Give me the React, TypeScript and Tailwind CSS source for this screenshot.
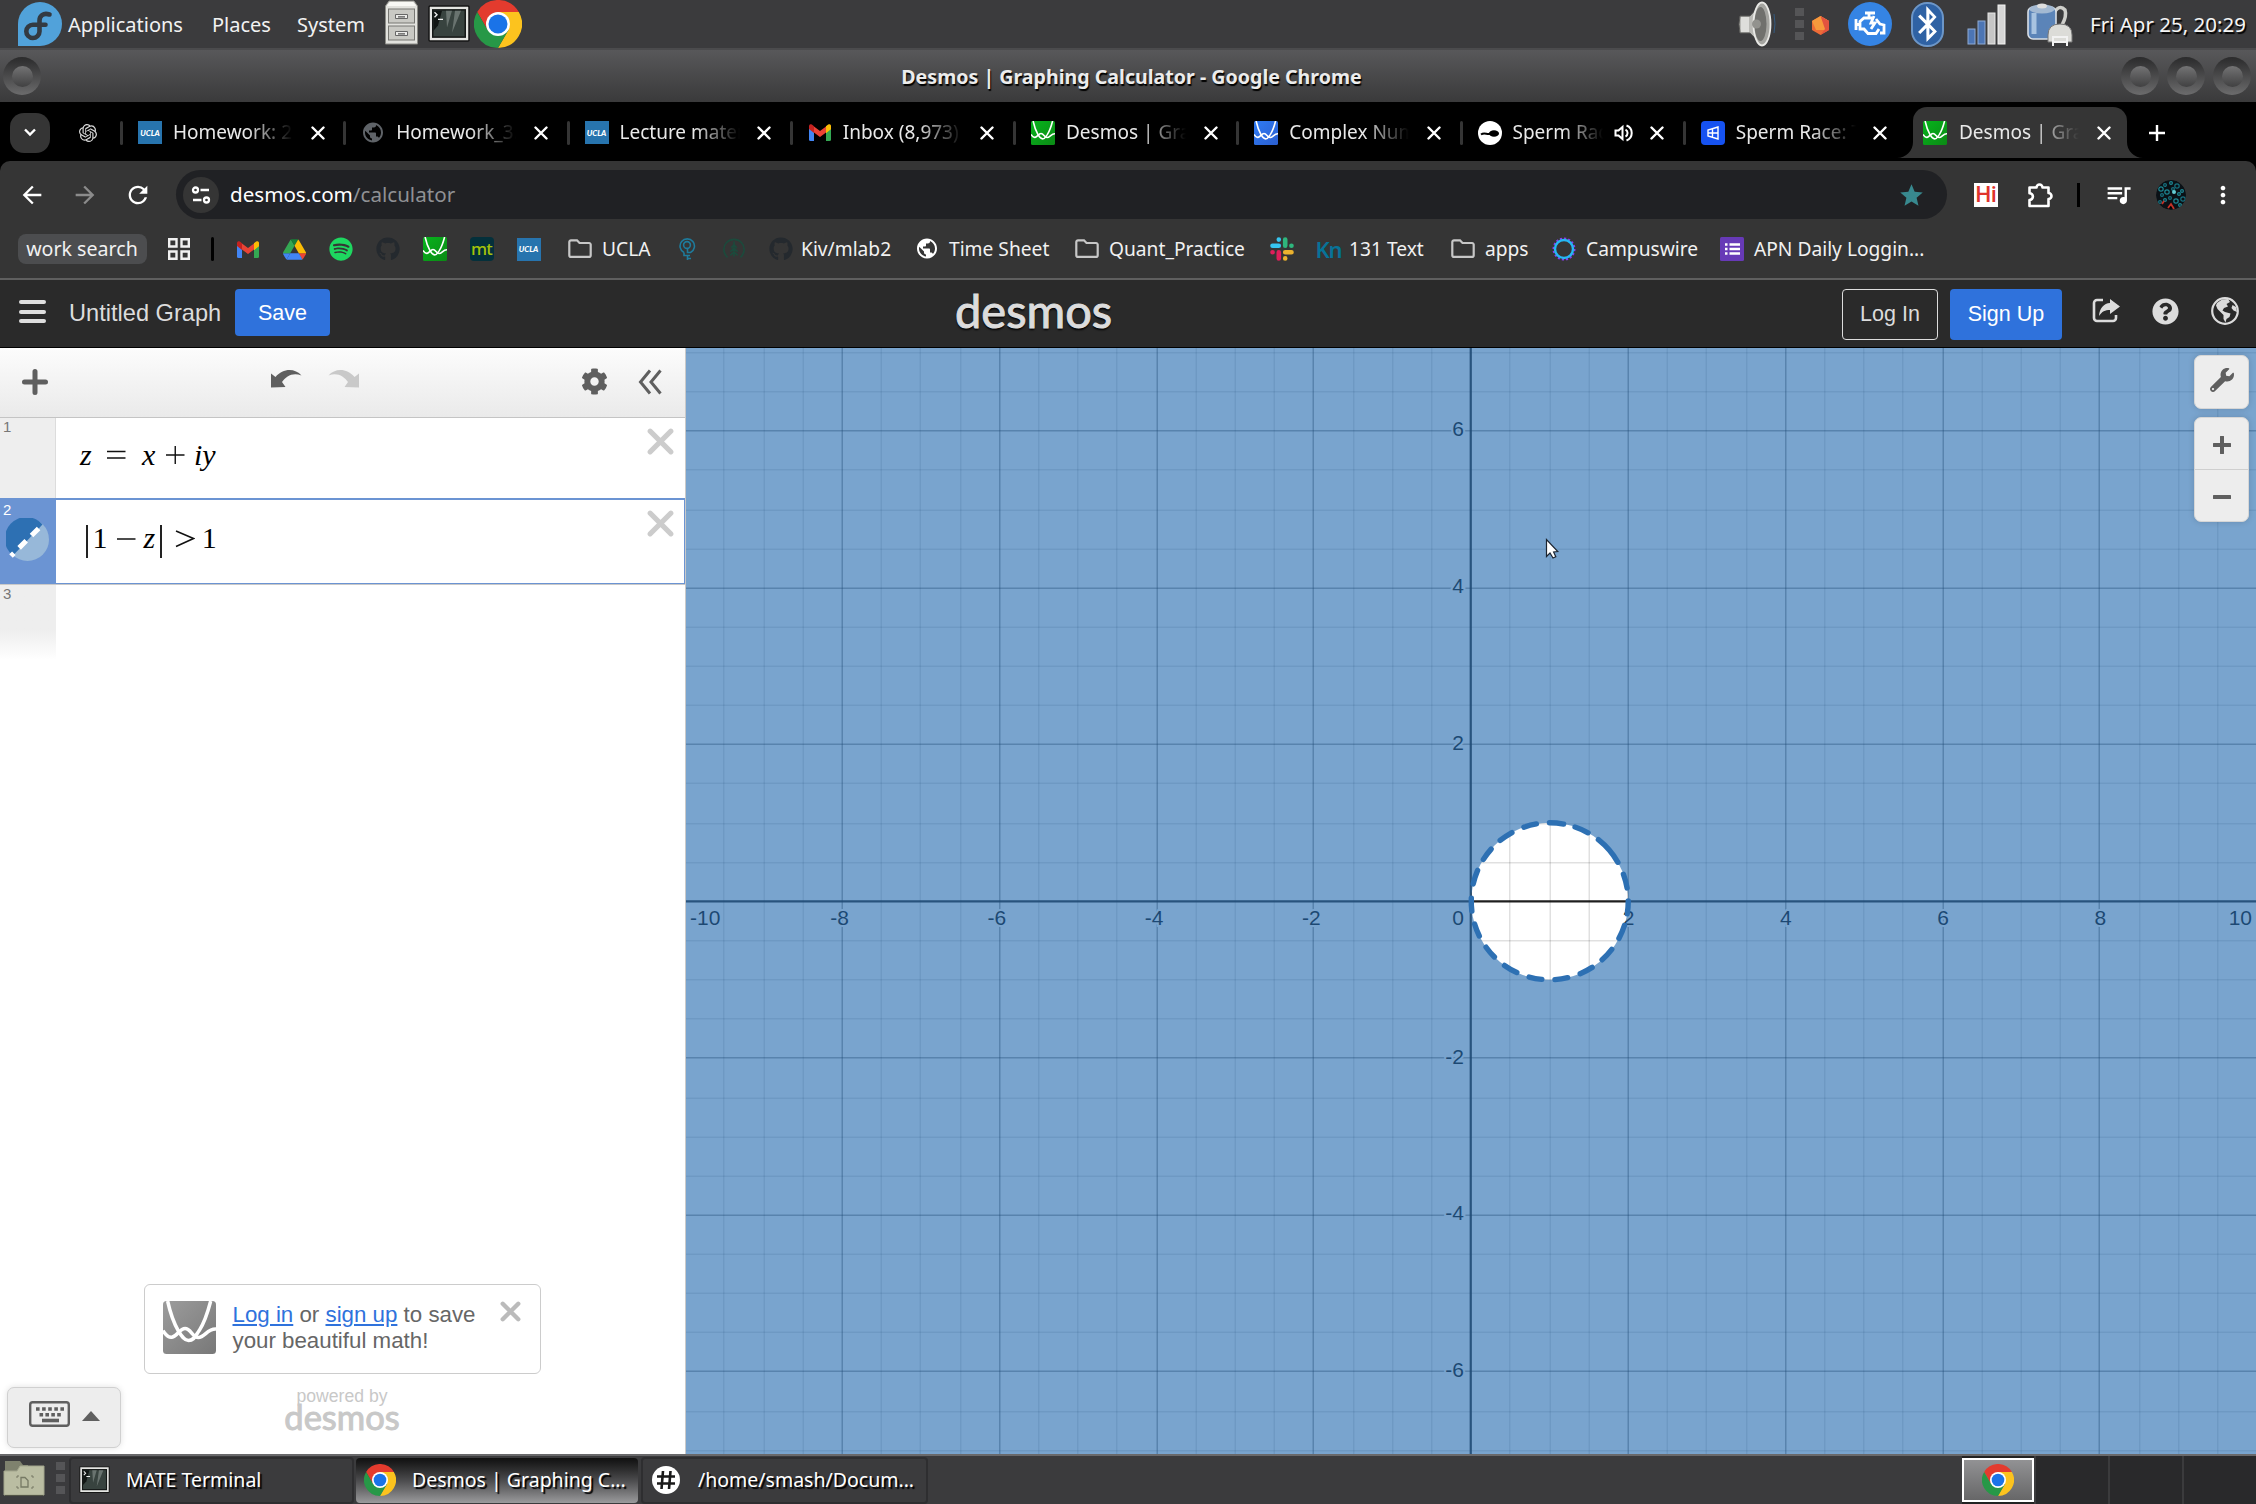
import React from "react";
import { FaFedora, FaGithub, FaSpotify, FaWrench, FaCog, FaBluetoothB, FaQuestionCircle } from "react-icons/fa";
import { MdArrowBack, MdArrowForward, MdRefresh, MdPublic, MdStar, MdQueueMusic, MdMoreVert } from "react-icons/md";
import { SiOpenai } from "react-icons/si";

type SizeProps = { size: number };

function Chrome({ size }: SizeProps) {
  return (
    <svg width={size} height={size} viewBox="0 0 48 48" className="shrink-0">
      <path d="M24 12H44.8A24 24 0 0 0 3.2 12L13.6 30Z" fill="#e33b2e" />
      <path d="M34.4 30L24 48A24 24 0 0 0 44.8 12H24Z" fill="#fcc31e" />
      <path d="M13.6 30L3.2 12A24 24 0 0 0 24 48L34.4 30Z" fill="#279847" />
      <circle cx="24" cy="24" r="12" fill="#fff" />
      <circle cx="24" cy="24" r="9.5" fill="#1a73e8" />
    </svg>
  );
}

function DesmosMark({ size, from, to }: SizeProps & { from: string; to: string }) {
  const id = "dm" + from.slice(1) + size;
  return (
    <svg width={size} height={size} viewBox="0 0 24 24" className="shrink-0">
      <defs>
        <linearGradient id={id} x1="0" y1="0" x2="1" y2="1">
          <stop offset="0" stopColor={from} />
          <stop offset="1" stopColor={to} />
        </linearGradient>
      </defs>
      <rect width="24" height="24" rx="1.6" fill={`url(#${id})`} />
      <g fill="none" stroke="#fff" strokeWidth="1.6">
        <path d="M2.1 0C3.3 5.500 4.800 9.800 7 13.600C8.200 15.600 9.400 17.800 11.600 17.900C14 17.900 14.700 15.800 16.400 13.400C18.600 10 20.300 5 21.600 0" />
        <path d="M0 13.400C1.200 15.400 2.400 16.600 4 16.400C6.600 16 7.400 12.500 10 12.500C12.600 12.500 13.400 16.500 16 16.500C19 16.500 20 12.500 24 12.700" />
      </g>
    </svg>
  );
}

function Ucla() {
  return (
    <div className="flex h-[23px] w-6 shrink-0 items-center justify-center bg-[#2774ae] font-['Lato'] text-[8px] font-black italic text-white">
      UCLA
    </div>
  );
}

function Gmail() {
  return (
    <svg width="22" height="17" viewBox="0 0 22 17" className="shrink-0">
      <path d="M0 2.500V15.500A1.500 1.500 0 0 0 1.500 17H5V7Z" fill="#4285f4" />
      <path d="M22 2.500V15.500A1.500 1.500 0 0 1 20.500 17H17V7Z" fill="#34a853" />
      <path d="M17 2L22 1.500V5L17 9Z" fill="#fbbc04" />
      <path d="M5 2.500L11 7L17 2.500V8.500L11 13L5 8.500Z" fill="#ea4335" />
      <path d="M0 2A2 2 0 0 1 3.500 1L5 2.200V9L0 5Z" fill="#c5221f" />
      <path d="M22 2A2 2 0 0 0 18.500 1L17 2.200V9L22 5Z" fill="#fbbc04" />
    </svg>
  );
}

function Drive() {
  return (
    <svg width="23" height="21" viewBox="0 0 87 78">
      <path d="M6.600 66.900L10.400 73.500C11.200 74.900 12.300 76 13.700 76.800L27.500 53H0C0 54.500.4 56.100 1.200 57.500Z" fill="#4285f4" />
      <path d="M43.600 25L29.900 1.200C28.500 2 27.400 3.100 26.600 4.500L1.200 48.500C.4 49.900 0 51.400 0 53H27.500Z" fill="#34a853" />
      <path d="M73.500 76.800C74.900 76 76 74.900 76.800 73.500L86.100 57.500C86.900 56.100 87.300 54.600 87.300 53H59.800L65.600 64.500Z" fill="#ea4335" />
      <path d="M43.600 25L57.400 1.200C56 .4 54.400 0 52.900 0H34.400C32.800 0 31.200.4 29.900 1.200Z" fill="#188038" />
      <path d="M59.800 53H27.500L13.700 76.800C15.100 77.600 16.700 78 18.200 78H69C70.600 78 72.100 77.600 73.500 76.800Z" fill="#4285f4" />
      <path d="M73.400 26.500L60.700 4.500C59.900 3.100 58.800 2 57.400 1.200L43.600 25L59.800 53H87.200C87.200 51.500 86.800 49.900 86 48.500Z" fill="#fbbc04" />
    </svg>
  );
}

function Slack() {
  return (
    <svg width="24" height="24" viewBox="0 0 24 24" strokeWidth="4.600" strokeLinecap="round">
      <path d="M2.500 8.800H8.800M8.800 2.500V2.600" stroke="#36c5f0" />
      <path d="M15.200 2.500V8.800M21.500 8.800H21.400" stroke="#2eb67d" />
      <path d="M21.500 15.200H15.200M15.200 21.500V21.400" stroke="#ecb22e" />
      <path d="M8.800 21.500V15.200M2.500 15.200H2.600" stroke="#e01e5a" />
    </svg>
  );
}

function Folder() {
  return (
    <svg width="24" height="20" viewBox="0 0 24 20" fill="none" stroke="#c7c7c7" strokeWidth="2.200">
      <path d="M3 1.300H9L11.500 4H21A1.600 1.600 0 0 1 22.700 5.600V16.200A1.700 1.700 0 0 1 21 17.900H3A1.700 1.700 0 0 1 1.300 16.200V3A1.700 1.700 0 0 1 3 1.300Z" />
    </svg>
  );
}

function Cross({ size, color, width }: SizeProps & { color: string; width: number }) {
  return (
    <svg width={size} height={size} viewBox={`0 0 ${size} ${size}`} className="shrink-0">
      <path d={`M${width / 1.6} ${width / 1.6}L${size - width / 1.6} ${size - width / 1.6}M${size - width / 1.6} ${width / 1.6}L${width / 1.6} ${size - width / 1.6}`} stroke={color} strokeWidth={width} strokeLinecap="round" />
    </svg>
  );
}

function TerminalIcon({ w, h }: { w: number; h: number }) {
  return (
    <svg width={w} height={h} viewBox="0 0 42 37" preserveAspectRatio="none" className="shrink-0">
      <rect x="1" y="1" width="40" height="34" rx="1" fill="#e4e5e2" stroke="#161616" strokeWidth="1.500" />
      <rect x="4" y="4" width="34" height="28" fill="#151817" />
      <rect x="5.500" y="5.500" width="31" height="25" fill="#38433f" />
      <path d="M18 5.500H24L19 22Z M27 5.500H33L24 27Z" fill="#76807c" opacity=".8" />
      <path d="M5.500 5.500H14L10 20L5.500 25Z" fill="#111614" />
      <path d="M6.500 7L9 9.500L6.500 12M10 14H15" fill="none" stroke="#eee" strokeWidth="1.400" />
    </svg>
  );
}

function Cabinet() {
  return (
    <svg width="33" height="45" viewBox="0 0 33 45">
      <path d="M4 1H29L32.500 6V44H.5V6Z" fill="#e2e2de" stroke="#8b8b86" />
      <path d="M5 2H28L31 6H2Z" fill="#f8f8f5" />
      <rect x="3.500" y="9" width="26" height="14" fill="#c9c9c4" stroke="#777773" />
      <rect x="3.500" y="26" width="26" height="14" fill="#c9c9c4" stroke="#777773" />
      <path d="M10.500 14.500H22.500V18.500H10.500ZM10.500 31.500H22.500V35.500H10.500Z" fill="#ececea" stroke="#666" />
      <path d="M13 16.800H20M13 33.800H20" stroke="#555" strokeWidth="1.200" />
    </svg>
  );
}

function TopPanel() {
  const menu = "mt-px text-[20px] leading-none text-[#f2f2f2]";
  return (
    <div className="flex h-[50px] items-center border-b-2 border-[#4b4b4d] bg-[#3b3b3d]">
      <div className="ml-[18px] h-11 w-11 rounded-full rounded-bl-lg bg-[#51a2da]">
        <svg viewBox="0 0 44 44" className="h-11 w-11" fill="none" stroke="#333a42" strokeWidth="4.600" strokeLinecap="round">
          <path d="M31.500 12.500C25 10.500 21.500 14 21.500 18.500V29.500A6.600 6.600 0 1 1 15 22.800H27.500" />
        </svg>
      </div>
      <span className={"ml-1.5 w-[144px] " + menu}>Applications</span>
      <span className={"w-[85px] " + menu}>Places</span>
      <span className={"w-[88px] " + menu}>System</span>
      <div className="mb-1"><Cabinet /></div>
      <div className="ml-[10px]"><TerminalIcon w={42} h={38} /></div>
      <div className="ml-[4px]"><Chrome size={48} /></div>
      <div className="ml-[1216px] flex items-center">
        <svg width="39" height="46" viewBox="0 0 39 46">
          <path d="M2 15H12L24 2V44L12 32H2Q0 23 2 15Z" fill="#b9b9b5" stroke="#595957" />
          <path d="M3 16H11V31H3Z" fill="#dededb" />
          <ellipse cx="24" cy="23" rx="8.500" ry="21.500" fill="#a5a5a1" stroke="#e9e9e6" strokeWidth="1.800" />
          <ellipse cx="22.500" cy="23" rx="6" ry="17" fill="#70706d" />
          <circle cx="18.500" cy="23" r="4.500" fill="#92928e" />
          <path d="M36 13Q38 23 36 32" stroke="#345a80" fill="none" />
        </svg>
        <div className="ml-[18px] flex w-[9px] flex-col gap-1">
          <i className="h-2 bg-[#555557]" /><i className="h-2 bg-[#555557]" /><i className="h-2 bg-[#555557]" />
        </div>
        <svg width="17" height="19" viewBox="0 0 17 19" className="ml-[8px] mt-0.5">
          <path d="M8.500 0L17 5V14L8.500 19L0 14V5Z" fill="#ee6c37" />
          <path d="M8.500 0L17 5L13 14L4 14L0 5Z" fill="#f79a3c" />
          <path d="M8.500 0L13 13L8.500 19L17 14V5Z" fill="#e2533f" />
        </svg>
        <div className="ml-[19px] flex h-11 w-11 items-center justify-center rounded-full bg-[#3584e4]">
          <svg width="33" height="26" viewBox="0 0 33 26" fill="none" stroke="#fff" strokeWidth="2.800">
            <path d="M2 8V19M2 13.500H6M11 2H21M15 2V6M18 7H10L6 10.500V18H10L14 22.500H22L25 18M20 5L17 12H21L17 18" />
            <path d="M22 8L26 13L30 14V22H26" />
          </svg>
        </div>
        <div className="ml-[19px] flex h-[45px] w-[33px] items-center justify-center rounded-[16px] border-2 border-[#6c96c8] bg-[#2f62a4]">
          <FaBluetoothB size={36} color="#fff" />
        </div>
        <svg width="40" height="44" viewBox="0 0 40 44" className="ml-[23px]">
          <rect x="1" y="27" width="7" height="15" fill="#4c75b4" stroke="#8fabd4" />
          <rect x="11" y="19" width="7" height="23" fill="#4c75b4" stroke="#8fabd4" />
          <rect x="21" y="11" width="7" height="31" fill="#c6c6c6" stroke="#e8e8e8" />
          <rect x="31" y="3" width="7" height="39" fill="#d6d6d6" stroke="#f4f4f4" />
        </svg>
        <svg width="48" height="46" viewBox="0 0 48 46" className="ml-[20px]">
          <path d="M26 14Q32 2 38 9Q40 15 35 24" fill="none" stroke="#cfcfcb" strokeWidth="3.500" />
          <rect x="1" y="6" width="28" height="32" rx="5" fill="#5b84b8" stroke="#d9dfe6" strokeWidth="1.600" />
          <path d="M7 12V33" stroke="#a8c3e0" strokeWidth="5" />
          <ellipse cx="15" cy="8" rx="12.500" ry="4.500" fill="#a3b9d2" />
          <ellipse cx="15" cy="5" rx="5" ry="2.500" fill="#dedede" />
          <path d="M21 34Q21 23 33 23Q45 23 45 34V41H21Z" fill="#dcdcd8" stroke="#777" />
          <path d="M26 41V36H40V41M26 45V41H40V45" fill="none" stroke="#f2f2f2" strokeWidth="2" />
        </svg>
      </div>
      <span className="ml-[15px] mt-px whitespace-nowrap text-[20.500px] leading-none text-[#f5f5f5] [text-shadow:1.500px_1.500px_1px_#000]">Fri Apr 25, 20:29</span>
    </div>
  );
}

function WindowKnob() {
  return (
    <div className="flex h-[38px] w-[38px] items-center justify-center rounded-full bg-linear-to-b from-[#2b2b2c] to-[#6c6c6d]">
      <div className="h-[21px] w-[21px] rounded-full bg-linear-to-b from-[#747475] to-[#414142]" />
    </div>
  );
}

function TitleBar() {
  return (
    <div className="flex h-[52px] items-center justify-between bg-linear-to-b from-[#58585a] to-[#3a3a3b] pl-[3px] pr-[5px]">
      <div className="w-[133px]"><WindowKnob /></div>
      <span className="ml-1.5 mt-0.5 text-[19.600px] font-bold text-[#ececec] [text-shadow:1px_2px_1px_#000]">Desmos | Graphing Calculator - Google Chrome</span>
      <div className="flex gap-2"><WindowKnob /><WindowKnob /><WindowKnob /></div>
    </div>
  );
}

const tabs: { title: string; icon: React.ReactNode; audio?: boolean }[] = [
  { title: "Homework: 2", icon: <Ucla /> },
  { title: "Homework_3.", icon: <MdPublic size={25} color="#5f6368" /> },
  { title: "Lecture mater", icon: <Ucla /> },
  { title: "Inbox (8,973) -", icon: <Gmail /> },
  { title: "Desmos | Gra", icon: <DesmosMark size={24} from="#06b41c" to="#0b8a15" /> },
  { title: "Complex Num", icon: <DesmosMark size={24} from="#2f7bf5" to="#2b5fd0" /> },
  {
    title: "Sperm Race",
    icon: (
      <svg width="24" height="24" viewBox="0 0 24 24"><circle cx="12" cy="12" r="12" fill="#fff" /><path d="M3 13.500C7 10.500 9 14.500 13 12.500" stroke="#000" strokeWidth="2" fill="none" /><ellipse cx="16" cy="12.500" rx="5" ry="3.200" fill="#000" /></svg>
    ),
    audio: true,
  },
  {
    title: "Sperm Race: T",
    icon: (
      <svg width="24" height="24" viewBox="0 0 24 24"><rect width="24" height="24" rx="4" fill="#1652f0" /><path d="M17 6L7 9V15L17 18ZM7 12H17M11.500 8V16" stroke="#fff" strokeWidth="1.400" fill="none" /></svg>
    ),
  },
];

function TabStrip() {
  return (
    <div className="flex h-[59px] items-center bg-black pt-0.5 text-[19px] text-[#e9e9e9]">
      <div className="ml-[10px] flex h-10 w-10 items-center justify-center rounded-[14px] bg-[#353535]">
        <svg width="12" height="9" viewBox="0 0 12 9" fill="none" stroke="#fff" strokeWidth="2.400"><path d="M1 1.500L6 6.500L11 1.500" /></svg>
      </div>
      <div className="ml-[29px]"><SiOpenai size={18} color="#d8d8d8" /></div>
      <div className="ml-[23px] flex items-center">
        {tabs.map((t, i) => (
          <div key={i} className="flex w-[223.250px] shrink-0 items-center">
            <div className="h-6 w-[3px] shrink-0 rounded bg-[#353535]" />
            <div className="ml-[15px] flex w-6 shrink-0 justify-center">{t.icon}</div>
            <div className={t.audio ? "-mt-px ml-[11px] w-[90px] overflow-hidden whitespace-nowrap [mask-image:linear-gradient(to_right,#000_55%,transparent)]" : "-mt-px ml-[11px] w-[120px] overflow-hidden whitespace-nowrap [mask-image:linear-gradient(to_right,#000_62%,transparent)]"}>{t.title}</div>
            {t.audio && (
              <svg width="19" height="18" viewBox="0 0 19 18" className="ml-[11px] shrink-0" fill="none" stroke="#fff" strokeWidth="2">
                <path d="M1.500 6.500H4.500L8.500 3V15L4.500 11.500H1.500ZM11.500 5.500A4 4 0 0 1 11.500 12.500M12.500 1.500A8 8 0 0 1 12.500 16.500" />
              </svg>
            )}
            <div className="ml-[17.500px]"><Cross size={14} color="#fff" width={2.4} /></div>
          </div>
        ))}
        <div className="relative ml-[7px] flex h-[51px] w-[214px] shrink-0 items-center self-end rounded-t-[14px] bg-[#353535]">
          <svg className="absolute -left-4 bottom-0" width="16" height="16"><path d="M16 0V16H0A16 16 0 0 0 16 0" fill="#353535" /></svg>
          <svg className="absolute -right-4 bottom-0" width="16" height="16"><path d="M0 0V16H16A16 16 0 0 1 0 0" fill="#353535" /></svg>
          <div className="ml-[10px]"><DesmosMark size={24} from="#06b41c" to="#0b8a15" /></div>
          <div className="-mt-px ml-[12px] w-[120px] overflow-hidden whitespace-nowrap [mask-image:linear-gradient(to_right,#000_62%,transparent)]">Desmos | Gra</div>
          <div className="ml-[17.500px]"><Cross size={14} color="#fff" width={2.4} /></div>
        </div>
        <svg width="16" height="16" viewBox="0 0 16 16" className="ml-[22px]"><path d="M8 0V16M0 8H16" stroke="#fff" strokeWidth="2.400" /></svg>
      </div>
    </div>
  );
}

const avatarSpots = [
  [5, 9], [9, 5], [15, 3], [21, 6], [26, 11], [6, 15], [11, 12], [17, 9], [23, 14], [27, 19], [9, 20], [14, 18], [20, 21], [4, 22], [24, 25],
];

function Toolbar() {
  return (
    <div className="flex h-[67px] items-center">
      <div className="ml-[18px]"><MdArrowBack size={28} color="#fff" /></div>
      <div className="ml-[25px]"><MdArrowForward size={28} color="#8b8b8b" /></div>
      <div className="ml-[25px]"><MdRefresh size={28} color="#fff" /></div>
      <div className="ml-6 flex h-[49px] w-[1771px] items-center rounded-full bg-[#202124] pl-[7px] pr-[22px]">
        <div className="flex h-9 w-9 items-center justify-center rounded-full bg-[#353535]">
          <svg width="20" height="18" viewBox="0 0 20 18" fill="none" stroke="#fff" strokeWidth="2.300">
            <circle cx="4.500" cy="4" r="2.500" /><path d="M9.500 4H18M2 14H10.500" /><circle cx="15.500" cy="14" r="2.500" />
          </svg>
        </div>
        <span className="ml-[11px] text-[20.600px] text-white">desmos.com<span className="text-[#8f9194]">/calculator</span></span>
        <MdStar size={27} color="#38898f" className="ml-auto mt-0.5" />
      </div>
      <div className="ml-[27px] flex h-6 w-6 items-center justify-center bg-white font-['Roboto'] text-[22px] font-medium leading-none text-[#e0332c]">Hi</div>
      <svg width="28" height="28" viewBox="0 0 28 28" className="ml-[28px]" fill="none" stroke="#fff" strokeWidth="2.600" strokeLinejoin="round">
        <path d="M3.500 6.500H10.500A3 3 0 0 1 16.500 6.500H22.500V12A3 3 0 0 1 22.500 18V25H3.500V19A3.400 3.400 0 0 0 3.500 12.200Z" />
      </svg>
      <div className="ml-[23px] h-6 w-[3px] bg-black" />
      <div className="ml-6"><MdQueueMusic size={29} color="#fff" /></div>
      <svg width="30" height="30" viewBox="0 0 30 30" className="ml-[23px] rounded-full">
        <circle cx="15" cy="15" r="15" fill="#0a1116" />
        {avatarSpots.map(([x, y], i) => (
          <circle key={i} cx={x} cy={y} r={i % 3 === 0 ? 2.2 : 1.4} fill="none" stroke={i % 2 ? "#17717f" : "#1d8793"} strokeWidth="1.200" />
        ))}
        <path d="M12 28L15 24L18 29M6 24L8 21" stroke="#c43127" strokeWidth="1.800" />
        <circle cx="18" cy="12" r="2" fill="#65ccd2" />
      </svg>
      <div className="ml-[23px]"><MdMoreVert size={28} color="#fff" /></div>
    </div>
  );
}

const bookmarks: { w: string; text?: string; icon: React.ReactNode }[] = [
  { w: "w-[47px]", icon: <Gmail /> },
  { w: "w-[46px]", icon: <Drive /> },
  { w: "w-[47px]", icon: <FaSpotify size={24} color="#1ed760" /> },
  { w: "w-[47px]", icon: <FaGithub size={24} color="#24292e" /> },
  { w: "w-[47px]", icon: <DesmosMark size={24} from="#06b41c" to="#087a12" /> },
  { w: "w-[47px]", icon: <div className="flex h-6 w-6 items-center justify-center rounded bg-[#04303b] pb-0.5 text-[17px] font-medium leading-none tracking-tighter text-[#a3c20a]">mt</div> },
  { w: "w-[51px]", icon: <Ucla /> },
  { w: "w-[107px]", icon: <Folder />, text: "UCLA" },
  { w: "w-[47px]", icon: <svg width="24" height="24" viewBox="0 0 24 24" fill="none" stroke="#1e7b9c" strokeWidth="1.600"><path d="M9 15.500A7.200 7.200 0 1 1 15.500 15.500H12.500V12M9 15.500V18.500H15M12.500 18.500V23M12.500 21.500H16" /><circle cx="12" cy="8" r="3.400" /></svg> },
  { w: "w-[47px]", icon: <svg width="26" height="24" viewBox="0 0 26 24" fill="none" stroke="#1c4a3c" strokeWidth="1.800"><path d="M6 21A11 11 0 1 1 20 21" /><path d="M13 4V20M13 7L10 11M13 7L16 11M13 11L9 15M13 11L17 15M13 15L9 19M13 15L17 19" /></svg> },
  { w: "w-[146px]", icon: <FaGithub size={24} color="#24292e" />, text: "Kiv/mlab2" },
  { w: "w-[160px]", icon: <MdPublic size={25} color="#fff" />, text: "Time Sheet" },
  { w: "w-[195px]", icon: <Folder />, text: "Quant_Practice" },
  { w: "w-[47px]", icon: <Slack /> },
  { w: "w-[134px]", icon: <span className="text-[22px] font-semibold leading-none tracking-tighter text-[#077398]">Kn</span>, text: "131 Text" },
  { w: "w-[101px]", icon: <Folder />, text: "apps" },
  { w: "w-[168px]", icon: <svg width="24" height="24" viewBox="0 0 24 24" fill="none"><circle cx="12" cy="12" r="10.500" stroke="#8a3df0" strokeWidth="2" strokeDasharray="2.200 1.900" /><circle cx="12" cy="12" r="9" stroke="#25b8f4" strokeWidth="2.400" /></svg>, text: "Campuswire" },
  { w: "w-[260px]", icon: <svg width="24" height="24" viewBox="0 0 24 24"><rect width="24" height="24" rx="1.500" fill="#673ab7" /><path d="M5 7.500H7.500M5 12H7.500M5 16.500H7.500M9.500 7.500H20M9.500 12H20M9.500 16.500H20" stroke="#fff" strokeWidth="2.600" /></svg>, text: "APN Daily Loggin..." },
];

function Bookmarks() {
  return (
    <div className="flex h-[42px] items-center text-[19.200px] text-[#f1f1f1]">
      <div className="ml-[18px] flex h-[30px] w-[129px] items-center justify-center whitespace-nowrap rounded-lg bg-[#4c4d4f] pr-px text-[19.600px]">work search</div>
      <svg width="22" height="22" viewBox="0 0 22 22" className="ml-[21px]" fill="none" stroke="#f1f1f1" strokeWidth="2.400">
        <path d="M1.200 1.200H8.500V8.500H1.200ZM13.500 1.200H20.800V8.500H13.500ZM1.200 13.500H8.500V20.800H1.200ZM13.500 13.500H20.800V20.800H13.500Z" />
      </svg>
      <div className="ml-[21px] mr-[21.500px] h-6 w-[3px] rounded bg-black" />
      {bookmarks.map((b, i) => (
        <div key={i} className={"flex shrink-0 items-center whitespace-nowrap " + b.w}>
          <div className={b.text === "131 Text" || b.text === "Kiv/mlab2" ? "mr-[8.500px] flex w-6 shrink-0 justify-center" : "mr-[10.500px] flex w-6 shrink-0 justify-center"}>{b.icon}</div>
          {b.text}
        </div>
      ))}
    </div>
  );
}

function AppHeader() {
  return (
    <div className="flex h-[70px] items-start border-b border-t-2 border-b-black border-t-[#5f5f5f] bg-[#2a2a2a] pt-[9px] font-['Liberation_Sans'] text-[#dcdcdc]">
      <div className="ml-[19px] mt-[11px] flex w-[27px] flex-col gap-[5.500px]">
        <i className="h-1 rounded-sm bg-[#dedede]" /><i className="h-1 rounded-sm bg-[#dedede]" /><i className="h-1 rounded-sm bg-[#dedede]" />
      </div>
      <span className="ml-[23px] mt-[9px] w-[166px] whitespace-nowrap text-[23.600px] leading-[30px]">Untitled Graph</span>
      <div className="flex h-[47px] w-[95px] items-center justify-center rounded bg-[#2f72dc] pt-px text-[21.500px] text-white">Save</div>
      <div className="ml-[625px] w-[160px] whitespace-nowrap font-['Lato'] text-[47px] leading-[42px] [-webkit-text-stroke:1px_#dcdcdc] [text-shadow:0_2px_2px_#000]">desmos</div>
      <div className="ml-[727px] flex h-[51px] w-24 items-center justify-center rounded border-[1.500px] border-[#dcdcdc] text-[21.500px]">Log In</div>
      <div className="ml-3 flex h-[51px] w-28 items-center justify-center rounded bg-[#2f72dc] text-[21.500px] text-white">Sign Up</div>
      <svg width="28" height="26" viewBox="0 0 28 26" className="ml-[30px] mt-[9px]">
        <path d="M11 2H5A3 3 0 0 0 2 5V20A3 3 0 0 0 5 23H21A3 3 0 0 0 24 20V17" fill="none" stroke="#dcdcdc" strokeWidth="2.600" />
        <path d="M18 1L28 8.500L18 16V12C13 12 10 13.500 7 18C7.500 10 12 5.500 18 5Z" fill="#dcdcdc" />
      </svg>
      <FaQuestionCircle size={27} color="#dcdcdc" className="ml-[32px] mt-[9px]" />
      <svg width="28" height="28" viewBox="0 0 28 28" className="ml-[32px] mt-[8px]">
        <circle cx="14" cy="14" r="12.800" fill="none" stroke="#dcdcdc" strokeWidth="2.200" />
        <path d="M6 6L11 2.500L17 2L19 5L15.500 7L17 9.500L13 11L11.500 13.500L14 15L19.500 16.500L18.500 20L15.500 22L14.500 25.500L12.500 22L12.500 18L9.500 15L6.500 12L5 8.500Z" fill="#dcdcdc" />
        <path d="M21.500 8L25 10L26 15L22.500 13.500L20.500 11Z" fill="#dcdcdc" />
      </svg>
    </div>
  );
}

function ExpressionPanel() {
  const math = "font-['Liberation_Serif'] text-[30px] leading-none text-black";
  return (
    <div className="flex h-full w-[686px] shrink-0 flex-col border-r border-[#c9c9c9] bg-white font-['Liberation_Sans']">
      <div className="flex h-[70px] shrink-0 items-center border-b border-[#c4c4c4] bg-linear-to-b from-[#fcfcfc] to-[#eaeaea] pb-[2px]">
        <svg width="26" height="26" viewBox="0 0 26 26" className="ml-[22px]"><path d="M13 2.500V23.500M2.500 13H23.500" stroke="#5f5f5f" strokeWidth="5" strokeLinecap="round" /></svg>
        <svg width="31" height="18" viewBox="0 0 31 18" className="mb-[5px] ml-[223px]"><path d="M0 3.500L4.500 7C12-2 24-2 30.500 5.500C22 2 15 6 11 12L14.500 17L0 17.500Z" fill="#5f5f5f" /></svg>
        <svg width="31" height="18" viewBox="0 0 31 18" className="mb-[5px] ml-[26px] -scale-x-100"><path d="M0 3.500L4.500 7C12-2 24-2 30.500 5.500C22 2 15 6 11 12L14.500 17L0 17.500Z" fill="#c9c9c9" /></svg>
        <FaCog size={27} color="#5f5f5f" className="ml-[222px]" />
        <svg width="24" height="26" viewBox="0 0 24 26" className="ml-[30px]" fill="none" stroke="#5f5f5f" strokeWidth="3"><path d="M12 1.500L2.500 13L12 24.500M22.500 1.500L13 13L22.500 24.500" /></svg>
      </div>
      <div className="flex h-20 shrink-0">
        <div className="w-14 border-r border-[#dcdcdc] bg-[#eeeeee] pl-[3px] pt-px text-[15px] leading-4 text-[#777]">1</div>
        <div className={"flex flex-1 items-start pl-[24px] pt-[22px] italic " + math}>
          <span className="w-[27px]">z</span>
          <svg width="19" height="30" className="mt-px"><path d="M0 10.500H18.500M0 17H18.500" stroke="#111" strokeWidth="1.500" /></svg>
          <span className="ml-[16px] w-[24px]">x</span>
          <svg width="19" height="30" className="mt-px"><path d="M0 14H18.500M9.250 5V23" stroke="#111" strokeWidth="1.400" /></svg>
          <span className="ml-[9px]">iy</span>
        </div>
        <div className="mr-[11px] mt-[10px]"><Cross size={27} color="#cccccc" width={5} /></div>
      </div>
      <div className="flex h-[87px] shrink-0 border-b border-[#c9c9c9] bg-[#6b94d3]">
        <div className="w-14 pl-[3px] pt-1 text-[15px] leading-4 text-white">
          2
          <svg width="43" height="43" viewBox="0 0 43 43" className="ml-[3px]">
            <circle cx="21.500" cy="21.500" r="21.500" fill="#97b8d9" />
            <path d="M7 37.500A21.500 21.500 0 1 1 36.500 6.500Z" fill="#2d70b3" />
            <path d="M5 38L37 6" stroke="#fff" strokeWidth="5" strokeDasharray="10 7.500" strokeDashoffset="6" />
          </svg>
        </div>
        <div className="mb-px mr-px mt-0.5 flex flex-1 items-start bg-white">
          <div className={"flex flex-1 items-start pl-[30px] pt-[23px] " + math}>
            <div className="mt-0.5 h-[33px] w-[1.500px] bg-[#222]" />
            <span className="ml-[5px]">1</span>
            <svg width="19" height="30" className="ml-[9px]"><path d="M0 16H18.500" stroke="#111" strokeWidth="1.500" /></svg>
            <span className="ml-[8px] italic">z</span>
            <div className="ml-[5px] mt-0.5 h-[33px] w-[1.500px] bg-[#222]" />
            <svg width="20" height="30" className="ml-[13px]" fill="none"><path d="M1 8L18.500 15.500L1 23.500" stroke="#111" strokeWidth="1.500" /></svg>
            <span className="ml-[7px]">1</span>
          </div>
          <div className="mr-[10px] mt-[10px]"><Cross size={27} color="#cccccc" width={5} /></div>
        </div>
      </div>
      <div className="h-[75px] w-14 shrink-0 bg-linear-to-b from-[#eeeeee] from-60% to-white pl-[3px] pt-px text-[15px] leading-4 text-[#777]">3</div>
      <div className="flex-1" />
      <div className="mb-[10px] ml-[144px] flex h-[90px] w-[397px] shrink-0 rounded-md border-[1.500px] border-[#cccccc] pl-[17.500px] pt-4">
        <DesmosMark size={53} from="#9c9c9c" to="#787878" />
        <p className="ml-[17px] mt-px whitespace-nowrap text-[22.300px] leading-[26px] text-[#666]">
          <span className="text-[#2f72dc] underline">Log in</span> or <span className="text-[#2f72dc] underline">sign up</span> to save<br />your beautiful math!
        </p>
        <div className="ml-[25px]"><Cross size={21} color="#bbbbbb" width={4.4} /></div>
      </div>
      <div className="flex h-[70px] shrink-0 items-start pl-[7px]">
        <div className="mt-[3px] flex h-[61px] w-[114px] items-start rounded-[7px] border border-[#d0d0d0] bg-[#ededed] pl-[21px] pt-[13px] shadow-[0_0_6px_rgba(0,0,0,.12)]">
          <svg width="41" height="26" viewBox="0 0 41 26">
            <rect x="1.200" y="1.200" width="38.600" height="23.600" rx="2.500" fill="none" stroke="#5f5f5f" strokeWidth="2.400" />
            <path d="M7 8H35" stroke="#5f5f5f" strokeWidth="3.600" strokeDasharray="3.600 2.500" />
            <path d="M10.500 13.800H33" stroke="#5f5f5f" strokeWidth="3.600" strokeDasharray="3.600 2.300" />
            <path d="M13 19.500H30" stroke="#5f5f5f" strokeWidth="3.600" />
          </svg>
          <svg width="18" height="10" className="ml-[12px] mt-[10px]"><path d="M9 0L18 10H0Z" fill="#5f5f5f" /></svg>
        </div>
        <div className="ml-[161px] w-[120px] text-center text-[#c8c8c8]">
          <div className="mt-px text-[17.600px] leading-[22px]">powered by</div>
          <div className="font-['Lato'] text-[34.500px] leading-[20px] [-webkit-text-stroke:1px_#c8c8c8]">desmos</div>
        </div>
      </div>
    </div>
  );
}

/* Plot geometry, in pixels of the drawing area. */
const W = 1570, H = 1106, OX = 784.75, OY = 553.3, UNIT = 78.6;
const snap = (v: number) => Math.round(v / 1.5) * 1.5 + 0.25;
const halves = Array.from({ length: 41 }, (_, i) => (i - 20) / 2);
const rows = Array.from({ length: 29 }, (_, i) => (i - 14) / 2);
const dashes = [
  [-2, 12], [17, 31], [36.5, 62], [68, 82], [88, 101], [106, 120], [126, 140], [145.5, 159], [165, 178], [184, 197],
  [203, 217], [223, 236], [242, 255], [261, 274], [281, 295], [300.5, 313.5], [319, 333], [339, 352],
];
const R = 78.5, CX = OX + 79, CY = OY;
const arc = ([a, b]: number[]) => {
  const p = (d: number) => `${CX + R * Math.sin((d * Math.PI) / 180)} ${CY - R * Math.cos((d * Math.PI) / 180)}`;
  return `M${p(a + 1.8)}A${R} ${R} 0 0 1 ${p(b - 1.8)}`;
};

function Graph() {
  const label = { fontFamily: "Liberation Sans", fontSize: 21, stroke: "#fff", strokeWidth: 4, paintOrder: "stroke" } as const;
  return (
    <div className="relative h-full flex-1 bg-white">
      <svg width={W} height={H} viewBox={`0 0 ${W} ${H}`} className="block">
        {halves.filter((k) => k !== 0).map((k) => (
          <path key={"v" + k} d={`M${snap(OX + k * UNIT)} 0V${H}`} stroke="#000" strokeOpacity={k % 2 === 0 ? 0.36 : 0.12} strokeWidth="1.500" />
        ))}
        {rows.filter((k) => k !== 0).map((k) => (
          <path key={"h" + k} d={`M0 ${snap(OY - k * 78.4)}H${W}`} stroke="#000" strokeOpacity={k % 2 === 0 ? 0.36 : 0.12} strokeWidth="1.500" />
        ))}
        <path d={`M${OX} 0V${H}M0 ${OY}H${W}`} stroke="#000" strokeOpacity=".88" strokeWidth="2.200" />
        {[-8, -6, -4, -2, 2, 4, 6, 8].map((k) => (
          <text key={"x" + k} x={OX + 0.7 + k * UNIT + (k < 0 ? -3 : 0)} y="576.500" textAnchor="middle" {...label}>{k}</text>
        ))}
        <text x="4" y="576.500" {...label}>-10</text>
        <text x="1566" y="576.500" textAnchor="end" {...label}>10</text>
        <text x="778" y="576.500" textAnchor="end" {...label}>0</text>
        {[-6, -4, -2, 2, 4, 6].map((k) => (
          <text key={"y" + k} x="778" y={OY - k * 78.4 + 5.5} textAnchor="end" {...label}>{k}</text>
        ))}
        <path d={`M0 0H${W}V${H}H0ZM${CX - R} ${CY}A${R} ${R} 0 1 0 ${CX + R} ${CY}A${R} ${R} 0 1 0 ${CX - R} ${CY}Z`} fillRule="evenodd" fill="#2d70b3" fillOpacity=".64" />
        {dashes.map((d, i) => (
          <path key={i} d={arc(d)} fill="none" stroke="#2d70b3" strokeWidth="5.400" strokeLinecap="round" />
        ))}
        <path d="M860.500 191.500V208.500L864 205L867 210L869.800 208.800L867.600 204L871.800 203.500Z" fill="#fff" stroke="#1b2430" strokeWidth="1.200" />
      </svg>
      <div className="absolute right-[7px] top-[7px] flex w-[55px] flex-col gap-2">
        <div className="flex h-[54px] items-center justify-center rounded-[7px] border border-[#d6d6d6] bg-[#ededed] pb-[5px] shadow-[0_0_6px_rgba(0,0,0,.15)]"><FaWrench size={24} color="#5f5f5f" /></div>
        <div className="flex h-[105px] flex-col rounded-[7px] border border-[#d6d6d6] bg-[#ededed] shadow-[0_0_6px_rgba(0,0,0,.15)]">
          <div className="flex flex-1 items-center justify-center border-b border-[#cfcfcf] pt-[3px]"><svg width="18" height="18"><path d="M9 1V17M1 9H17" stroke="#5f5f5f" strokeWidth="4" strokeLinecap="round" /></svg></div>
          <div className="flex flex-1 items-center justify-center pt-[3px]"><svg width="18" height="18"><path d="M1 9H17" stroke="#5f5f5f" strokeWidth="4" strokeLinecap="round" /></svg></div>
        </div>
      </div>
    </div>
  );
}

function Taskbar() {
  const shadow = "text-[19.500px] leading-none text-white [text-shadow:2px_2px_1px_#000] whitespace-nowrap";
  return (
    <div className="flex h-[50px] items-center border-t-2 border-[#69696b] bg-[#3b3b3d]">
      <svg width="42" height="37" viewBox="0 0 42 37" className="mb-1 ml-[3px]">
        <path d="M2 1H17L20 5H25V14H2Z" fill="#7f826e" />
        <path d="M1 11H14L17 6H41V35H1Z" fill="#babda2" stroke="#a2a58c" />
        <path d="M18 17.500H22L25 20.500V27H18Z" fill="none" stroke="#767964" strokeWidth="1.300" />
        <path d="M14 18V16H16M28 16H30V18M14 26V28H16M28 28H30V26" fill="none" stroke="#767964" />
        <path d="M2 35.500H40" stroke="#525446" />
      </svg>
      <div className="mb-1 ml-[11px] flex w-[9px] flex-col gap-1"><i className="h-2 bg-[#555557]" /><i className="h-2 bg-[#555557]" /><i className="h-2 bg-[#555557]" /></div>
      <div className="ml-1 flex h-[47px] w-[285px] items-center rounded border-2 border-[#2e2e30] pl-2">
        <TerminalIcon w={31} h={28} />
        <span className={"ml-[16px] " + shadow}>MATE Terminal</span>
      </div>
      <div className="ml-0.5 flex h-[45px] w-[282px] items-center rounded bg-linear-to-b from-[#101010] via-[#4c4c4e] to-[#9b9b9d] pl-2">
        <Chrome size={32} />
        <span className={"ml-[16px] " + shadow}>Desmos | Graphing C...</span>
      </div>
      <div className="ml-[3px] flex h-[47px] w-[287px] items-center rounded border-2 border-[#2e2e30] pl-[9px]">
        <svg width="28" height="28" viewBox="0 0 28 28"><circle cx="14" cy="14" r="14" fill="#fff" /><path d="M11 5L9.500 23M18.500 5L17 23M5 10.500H23M5 17.500H23" stroke="#1a1a1a" strokeWidth="2.600" /></svg>
        <span className={"ml-[18px] " + shadow}>/home/smash/Docum...</span>
      </div>
      <div className="ml-auto flex h-12 gap-0.5">
        <div className="w-[72px] bg-[#222] pt-0.5"><div className="flex h-11 items-center justify-center border-2 border-white bg-linear-to-b from-[#929294] to-[#676768]"><Chrome size={32} /></div></div>
        <div className="w-[72px] bg-[#29292b]" /><div className="w-[72px] bg-[#29292b]" /><div className="w-[72px] bg-[#29292b]" />
      </div>
    </div>
  );
}

export default function App() {
  return (
    <div className="flex h-[1504px] w-[2256px] flex-col overflow-hidden bg-black font-['Noto_Sans',sans-serif]">
      <TopPanel />
      <TitleBar />
      <TabStrip />
      <div className="h-[117px] rounded-t-[10px] bg-[#353535]">
        <Toolbar />
        <Bookmarks />
      </div>
      <AppHeader />
      <div className="flex h-[1106px]">
        <ExpressionPanel />
        <Graph />
      </div>
      <Taskbar />
    </div>
  );
}
